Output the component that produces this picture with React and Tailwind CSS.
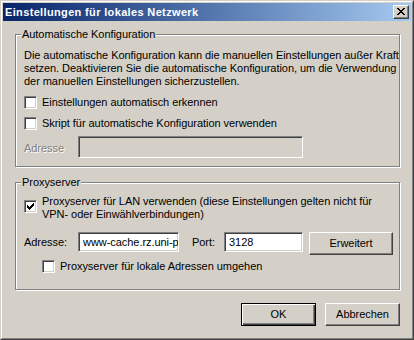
import React from "react";

function Pixels({ rows, color = "#000" }) {
  const w = rows[0].length;
  const h = rows.length;
  const rects = [];
  rows.forEach((r, y) =>
    r.split("").forEach((c, x) => {
      if (c === "X") rects.push(<rect key={x + "-" + y} x={x} y={y} width="1" height="1" fill={color} />);
    })
  );
  return (
    <svg width={w} height={h} viewBox={`0 0 ${w} ${h}`} shapeRendering="crispEdges" className="block">
      {rects}
    </svg>
  );
}

const CHECK = ["......X", ".....XX", "X...XXX", "XX.XXX.", "XXXXX..", ".XXX...", "..X...."];
const CROSS = ["XX....XX", ".XX..XX.", "..XXXX..", "...XX...", "..XXXX..", ".XX..XX.", "XX....XX"];

function Checkbox({ checked }) {
  return (
    <span className="w-[13px] h-[13px] shrink-0 bg-white border border-t-[#808080] border-l-[#808080] border-b-white border-r-white shadow-[inset_1px_1px_0_#404040,inset_-1px_-1px_0_#d4d0c8] flex items-center justify-center">
      {checked && <Pixels rows={CHECK} />}
    </span>
  );
}

const sunken =
  "border border-t-[#808080] border-l-[#808080] border-b-white border-r-white shadow-[inset_1px_1px_0_#404040,inset_-1px_-1px_0_#d4d0c8]";

function Field({ className = "", value, disabled }) {
  return (
    <input
      readOnly
      value={value ?? ""}
      disabled={disabled}
      className={`${className} ${disabled ? "bg-[#d4d0c8]" : "bg-white"} ${sunken} pl-[4px] pr-0 py-0 outline-none text-black leading-[13px]`}
    />
  );
}

function Button({ className = "", children, isDefault }) {
  if (isDefault) {
    return (
      <div
        className={`${className} border border-black shadow-[inset_1px_1px_0_#fff,inset_-1px_-1px_0_#404040,inset_-2px_-2px_0_#808080] flex items-center justify-center`}
      >
        {children}
      </div>
    );
  }
  return (
    <div
      className={`${className} border border-t-white border-l-white border-b-[#404040] border-r-[#404040] shadow-[inset_-1px_-1px_0_#808080] flex items-center justify-center`}
    >
      {children}
    </div>
  );
}

function Group({ label, className = "", children }) {
  return (
    <div
      className={`${className} relative ml-[12px] w-[385px] border border-[#808080] shadow-[inset_1px_1px_0_#fff,1px_1px_0_#fff] pl-[8px]`}
    >
      <span className="absolute -top-[7px] left-[5px] px-px bg-[#d4d0c8] leading-[13px]">{label}</span>
      {children}
    </div>
  );
}

export default function App() {
  return (
    <div className="w-[414px] h-[340px] bg-[#d4d0c8] border border-t-[#d4d0c8] border-l-[#d4d0c8] border-b-[#404040] border-r-[#404040] flex flex-col font-['Liberation_Sans',Arial,sans-serif] text-[11px] leading-[13px] text-black tracking-[-0.05px]">
      <div className="flex-1 border border-t-white border-l-white border-b-[#808080] border-r-[#808080] p-px flex flex-col">
        {/* Title bar */}
        <div className="h-[18px] shrink-0 flex items-center justify-between pl-[2px] pr-[2px] bg-gradient-to-r from-[#0a246a] to-[#a6caf0]">
          <span className="text-white font-bold tracking-[0.35px] whitespace-nowrap">Einstellungen für lokales Netzwerk</span>
          <Button className="w-[16px] h-[14px] bg-[#d4d0c8] pb-px">
            <Pixels rows={CROSS} />
          </Button>
        </div>

        {/* Automatische Konfiguration */}
        <Group label="Automatische Konfiguration" className="mt-[13px] pt-[14px] pb-[8px]">
          <p className="whitespace-nowrap">
            Die automatische Konfiguration kann die manuellen Einstellungen außer Kraft
            <br />
            setzen. Deaktivieren Sie die automatische Konfiguration, um die Verwendung
            <br />
            der manuellen Einstellungen sicherzustellen.
          </p>
          <div className="mt-[8px] flex items-center gap-[5px] h-[13px]">
            <Checkbox />
            <span className="whitespace-nowrap">Einstellungen automatisch erkennen</span>
          </div>
          <div className="mt-[8px] flex items-center gap-[5px] h-[13px]">
            <Checkbox />
            <span className="whitespace-nowrap">Skript für automatische Konfiguration verwenden</span>
          </div>
          <div className="mt-[6px] flex items-start">
            <span className="w-[54px] mt-[6px] text-[#808080] [text-shadow:1px_1px_0_#fff]">Adresse</span>
            <Field className="w-[225px] h-[22px]" disabled />
          </div>
        </Group>

        {/* Proxyserver */}
        <Group label="Proxyserver" className="mt-[15px] pt-[12px] pb-[16px]">
          <div className="flex items-start gap-[5px]">
            <span className="mt-[5px]">
              <Checkbox checked />
            </span>
            <span className="whitespace-nowrap">
              Proxyserver für LAN verwenden (diese Einstellungen gelten nicht für
              <br />
              VPN- oder Einwählverbindungen)
            </span>
          </div>
          <div className="mt-[11px] flex items-start">
            <span className="w-[54px] mt-[4px]">Adresse:</span>
            <Field className="w-[101px] h-[20px]" value="www-cache.rz.uni-passau.de" />
            <span className="ml-[13px] w-[32px] mt-[4px]">Port:</span>
            <Field className="w-[79px] h-[20px]" value="3128" />
            <Button className="ml-[6px] w-[84px] h-[23px]">Erweitert</Button>
          </div>
          <div className="mt-[5px] ml-[18px] flex items-center gap-[5px] h-[13px]">
            <Checkbox />
            <span className="whitespace-nowrap">Proxyserver für lokale Adressen umgehen</span>
          </div>
        </Group>

        {/* Buttons */}
        <div className="mt-[13px] ml-[12px] w-[385px] flex justify-end gap-[9px]">
          <Button className="w-[75px] h-[23px]" isDefault>
            OK
          </Button>
          <Button className="w-[75px] h-[23px]">Abbrechen</Button>
        </div>
      </div>
    </div>
  );
}
